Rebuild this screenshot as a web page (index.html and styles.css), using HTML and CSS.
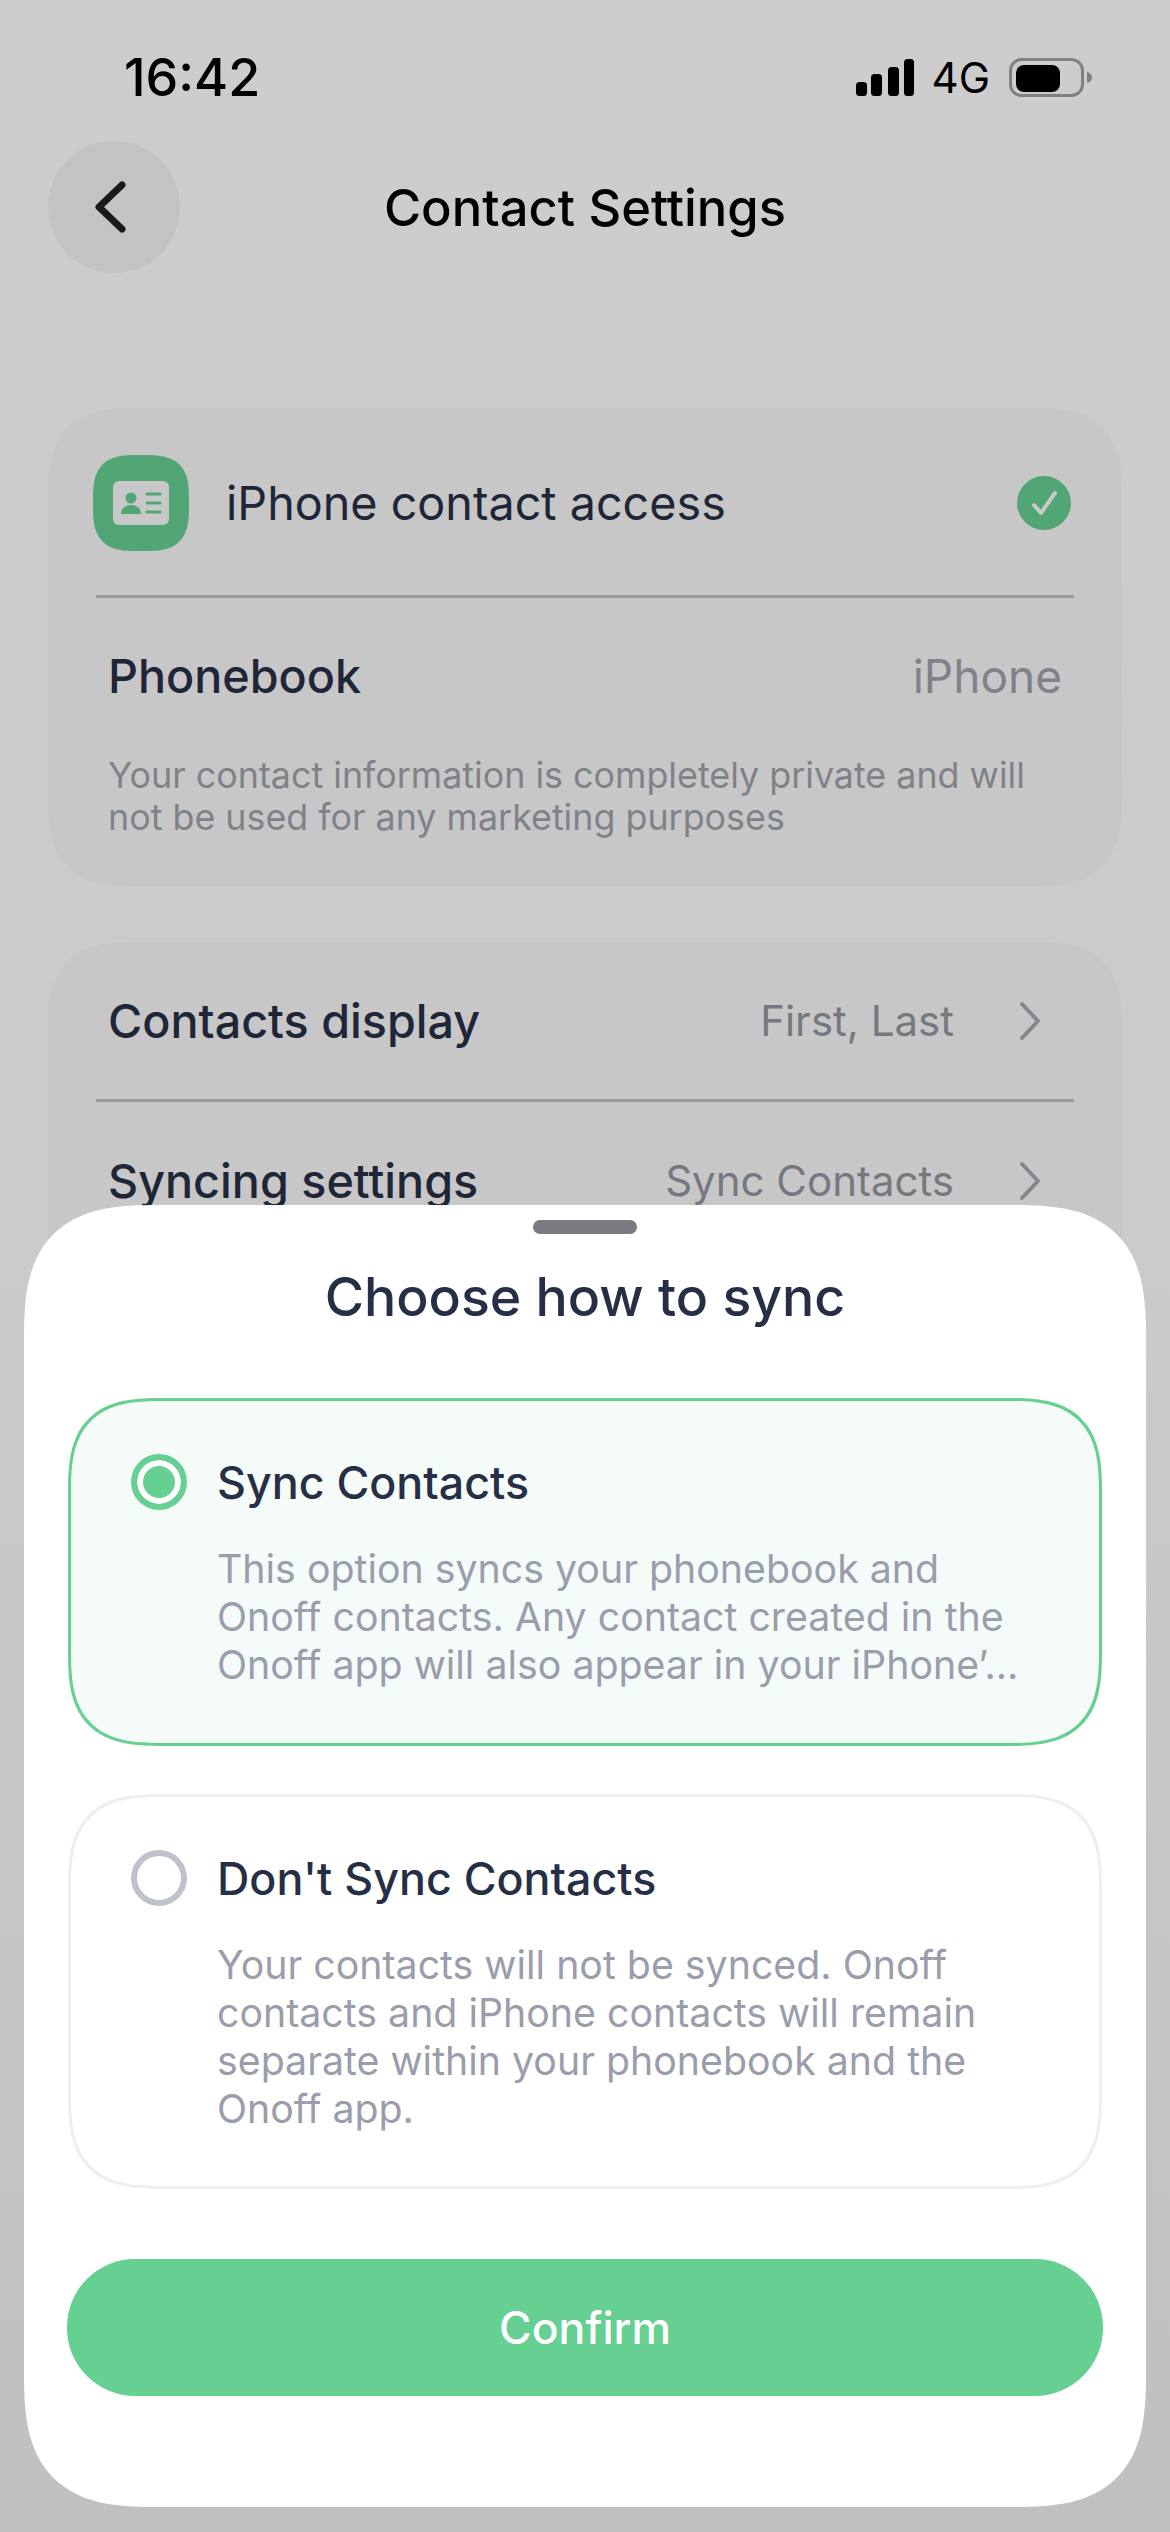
FILE: index.html
```html
<!DOCTYPE html>
<html lang="en">
<head>
    <meta charset="UTF-8">
    <meta name="viewport" content="width=device-width, initial-scale=1.0">
    <title>Contact Settings</title>
    <link rel="stylesheet" href="styles.css">
</head>
<body>
    <div class="screen">
        <div class="status-bar">
            <span class="clock">16:42</span>
            <div class="status-icons">
                <svg class="signal" width="58" height="37" viewBox="0 0 58 37">
                    <rect x="0" y="23" width="11" height="14" rx="3.5"/>
                    <rect x="15" y="15" width="11" height="22" rx="3.5"/>
                    <rect x="32" y="8" width="11" height="29" rx="3.5"/>
                    <rect x="48" y="0" width="10" height="37" rx="3.5"/>
                </svg>
                <span class="network">4G</span>
                <svg class="battery" width="83" height="39" viewBox="0 0 83 39">
                    <rect x="1.5" y="1.5" width="72" height="36" rx="11" fill="none" stroke="#808080" stroke-width="3"/>
                    <rect x="7" y="7" width="44" height="27" rx="8"/>
                    <path d="M78 14c3 0.5 5 3 5 5.500s-2 5-5 5.500z" fill="#808080"/>
                </svg>
            </div>
        </div>

        <header class="nav-bar">
            <button class="back-button">
                <svg width="36" height="52" viewBox="0 0 36 52" fill="none" stroke="#1a1a1a" stroke-width="7" stroke-linecap="round" stroke-linejoin="round">
                    <path d="M30 4 L7 26 L30 48"/>
                </svg>
            </button>
            <h1 class="nav-title">Contact Settings</h1>
        </header>

        <main>
            <section class="card card-access">
                <div class="access-row">
                    <div class="access-icon">
                        <svg width="56" height="44" viewBox="0 0 56 44">
                            <rect width="56" height="44" rx="6" fill="#c8c8c8"/>
                            <circle cx="18" cy="17" r="5.500" fill="#52a675"/>
                            <path d="M8 33c0-6 4.500-9 10-9s10 3 10 9z" fill="#52a675"/>
                            <path d="M34 13h13M34 22h13M34 31h13" stroke="#52a675" stroke-width="3" stroke-linecap="round"/>
                        </svg>
                    </div>
                    <span class="access-label">iPhone contact access</span>
                    <svg class="access-check" width="54" height="54" viewBox="0 0 54 54">
                        <circle cx="27" cy="27" r="27" fill="#52a675"/>
                        <path d="M17 29 L24 37 L38 17" fill="none" stroke="#c8c8c8" stroke-width="4" stroke-linecap="round" stroke-linejoin="round"/>
                    </svg>
                </div>
                <div class="divider"></div>
                <div class="row row-phonebook">
                    <span class="row-label">Phonebook</span>
                    <span class="row-value">iPhone</span>
                </div>
                <p class="card-note">Your contact information is completely private and will not be used for any marketing purposes</p>
            </section>

            <section class="card card-prefs">
                <div class="row row-link">
                    <span class="row-label">Contacts display</span>
                    <span class="row-detail">First, Last</span>
                    <svg class="chevron" width="24" height="40" viewBox="0 0 24 40" fill="none" stroke="#85878d" stroke-width="4" stroke-linecap="round" stroke-linejoin="round">
                        <path d="M4 3 L20 20 L4 37"/>
                    </svg>
                </div>
                <div class="divider"></div>
                <div class="row row-link">
                    <span class="row-label">Syncing settings</span>
                    <span class="row-detail">Sync Contacts</span>
                    <svg class="chevron" width="24" height="40" viewBox="0 0 24 40" fill="none" stroke="#85878d" stroke-width="4" stroke-linecap="round" stroke-linejoin="round">
                        <path d="M4 3 L20 20 L4 37"/>
                    </svg>
                </div>
            </section>
        </main>

        <!-- bottom sheet -->
        <div class="sheet">
            <div class="sheet-handle"></div>
            <h2 class="sheet-title">Choose how to sync</h2>

            <div class="option option-selected">
                <span class="radio radio-on"></span>
                <div class="option-body">
                    <h3 class="option-title">Sync Contacts</h3>
                    <p class="option-text">This option syncs your phonebook and Onoff contacts. Any contact created in the Onoff app will also appear in your iPhone’...</p>
                </div>
            </div>

            <div class="option">
                <span class="radio"></span>
                <div class="option-body">
                    <h3 class="option-title">Don't Sync Contacts</h3>
                    <p class="option-text">Your contacts will not be synced. Onoff contacts and iPhone contacts will remain separate within your phonebook and the Onoff app.</p>
                </div>
            </div>

            <button class="confirm-button">Confirm</button>
        </div>
    </div>
</body>
</html>
```

FILE: styles.css
```css
* {
    box-sizing: border-box;
}

body {
    margin: 0;
    font-family: Inter, "Liberation Sans", sans-serif;
    color: #262f45;
}

.screen {
    position: relative;
    width: 1170px;
    height: 2532px;
    overflow: hidden;
    background: linear-gradient(#cdcdcd 0%, #cbcbcb 50%, #c0c0c0 100%);
}

/* status bar */
.status-bar {
    display: flex;
    justify-content: space-between;
    align-items: center;
    height: 37px;
    margin-top: 59px;
    padding: 0 78px 0 124px;
    color: #000;
}

.clock {
    font-size: 52px;
    font-weight: 500;
    line-height: 37px;
}

.status-icons {
    display: flex;
    align-items: center;
}

.network {
    margin: 0 19px 0 18px;
    font-size: 42px;
    line-height: 37px;
}

/* nav bar */
.nav-bar {
    position: relative;
    display: flex;
    justify-content: center;
    align-items: center;
    height: 132px;
    margin-top: 45px;
}

.back-button {
    position: absolute;
    left: 48px;
    top: 0;
    display: flex;
    justify-content: center;
    align-items: center;
    width: 132px;
    height: 132px;
    padding: 0 8px 0 0;
    border: none;
    border-radius: 50%;
    background-color: #c3c3c3;
}

.nav-title {
    margin: 0;
    color: #000;
    font-size: 50.7px;
    font-weight: 500;
}

/* settings cards */
main {
    display: flex;
    flex-direction: column;
    gap: 56px;
    margin: 135px 48px 0;
    color: #1e2637;
}

.card {
    background-color: #c7c7c7;
    border-radius: 70px;
}

.card-access {
    height: 478px;
    padding: 47px 48px 0;
}

.card-prefs {
    height: 420px;
    padding: 0 48px;
}

.access-row {
    display: flex;
    align-items: center;
    height: 96px;
}

.access-icon {
    display: flex;
    justify-content: center;
    align-items: center;
    width: 96px;
    height: 96px;
    border-radius: 34px;
    background-color: #52a675;
    margin-left: -3px;
}

.access-label {
    flex: 1;
    margin-left: 37px;
    font-size: 46.7px;
}

.access-check {
    margin-right: 3px;
}

.divider {
    height: 3px;
    background-color: #9c9c9c;
}

.access-row + .divider {
    margin-top: 44px;
}

.row {
    display: flex;
    align-items: center;
    padding: 0 12px;
}

.row-phonebook {
    justify-content: space-between;
    height: 156px;
}

.row-link {
    height: 157px;
    padding-right: 32px;
}

.row-label {
    flex: 1;
    font-size: 46.7px;
    font-weight: 500;
}

.row-value {
    color: #808289;
    font-size: 46px;
}

.row-detail {
    color: #76787f;
    font-size: 42px;
}

.chevron {
    margin-left: 64px;
}

.card-note {
    margin: 0;
    padding: 0 12px;
    color: #808289;
    font-size: 35.85px;
    line-height: 42px;
}

/* bottom sheet */
.sheet {
    position: absolute;
    left: 24px;
    top: 1205px;
    width: 1122px;
    height: 1302px;
    padding: 15px 44px 0;
    background-color: #fff;
    border-radius: 100px;
}

.sheet-handle {
    width: 104px;
    height: 14px;
    margin: 0 auto;
    border-radius: 7px;
    background-color: #7a7a80;
}

.sheet-title {
    margin: 30px 0 68px;
    height: 66px;
    font-size: 53.6px;
    font-weight: 500;
    line-height: 66px;
    text-align: center;
}

.option {
    display: flex;
    gap: 30px;
    height: 395px;
    margin-top: 48px;
    padding: 54px 60px 0 60px;
    background-color: #fff;
    border: 3px solid #eeeeee;
    border-radius: 72px;
}

.option-selected {
    height: 348px;
    margin-top: 0;
    background-color: #f5fbf8;
    border-color: #66cf92;
}

.radio {
    flex: none;
    width: 56px;
    height: 56px;
    margin-top: -1px;
    border: 6px solid #bfc1cb;
    border-radius: 50%;
}

.radio-on {
    border-color: #66cf92;
    background-color: #66cf92;
    box-shadow: inset 0 0 0 6px #fff;
}

.option-body {
    padding-top: 1px;
}

.option-title {
    margin: 0 0 35px;
    height: 54px;
    font-size: 44.8px;
    font-weight: 500;
    line-height: 54px;
}

.option-text {
    margin: 0;
    color: #9a9dab;
    font-size: 39.3px;
    line-height: 48px;
}

.confirm-button {
    display: block;
    width: 1036px;
    height: 137px;
    margin: 70px 0 0 -1px;
    border: none;
    border-radius: 68px;
    background-color: #66cf92;
    color: #fff;
    font-family: inherit;
    font-size: 44.5px;
    font-weight: 500;
}

/* smoother iOS style corners where the browser has them */
@supports (corner-shape: squircle) {
    .card {
        border-radius: 90px;
        corner-shape: superellipse(1.5);
    }

    .access-icon {
        border-radius: 44px;
        corner-shape: superellipse(1.5);
    }

    .sheet {
        border-radius: 135px;
        corner-shape: superellipse(1.5);
    }

    .option {
        border-radius: 95px;
        corner-shape: superellipse(1.5);
    }
}
```
